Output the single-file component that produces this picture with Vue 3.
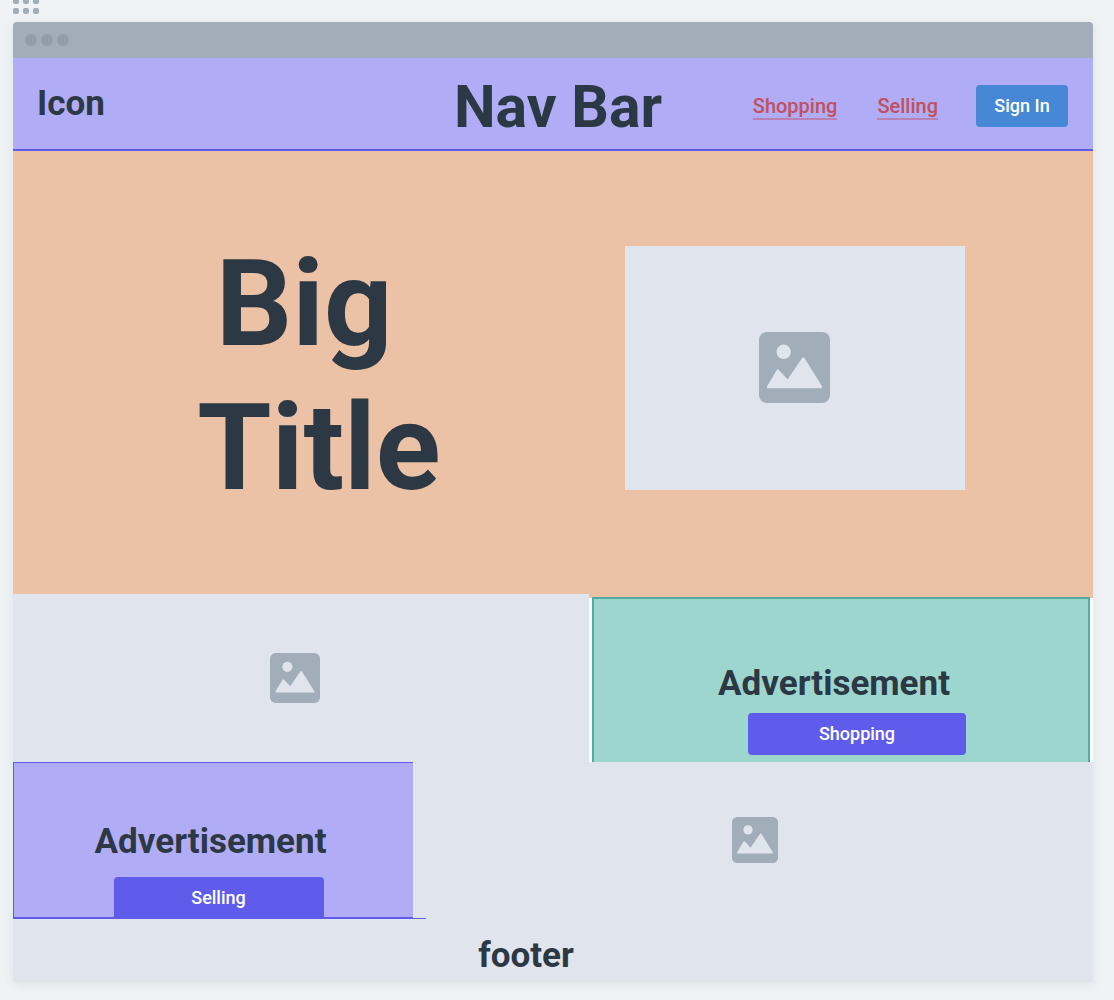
<script setup>
import { h } from 'vue'

const gripDots = 9
const windowDots = 3

const PictureIcon = () =>
  h('svg', { viewBox: '0 0 71 71', 'aria-hidden': 'true', width: '100%', height: '100%' }, [
    h('rect', { width: 71, height: 71, rx: 8, fill: '#a1adb9' }),
    h('circle', { cx: 24.7, cy: 19.8, r: 7.2, fill: '#e0e4ec' }),
    h('path', {
      d: 'M9 55 L18.8 38.5 L28.8 49.2 L44.3 26.5 L62 55 Z',
      fill: '#e0e4ec',
      stroke: '#e0e4ec',
      'stroke-width': 2.4,
      'stroke-linejoin': 'round'
    })
  ])
</script>

<template>
  <div class="page">
    <div class="grip" aria-hidden="true">
      <span v-for="n in gripDots" :key="n"></span>
    </div>

    <div class="window">
      <div class="titlebar" aria-hidden="true">
        <span v-for="n in windowDots" :key="n"></span>
      </div>

      <header class="nav">
        <h2 class="brand">Icon</h2>
        <h1 class="nav-title">Nav Bar</h1>
        <nav class="links">
          <a href="#shopping">Shopping</a>
          <a href="#selling">Selling</a>
          <button type="button" class="btn sign-in">Sign In</button>
        </nav>
      </header>

      <main>
        <section class="hero">
          <p class="big-title">Big&nbsp;<br />Title</p>
          <div class="hero-picture">
            <div class="icon icon-lg"><PictureIcon /></div>
          </div>
        </section>

        <section class="row shopping-row">
          <div class="picture shopping-picture">
            <div class="icon icon-md"><PictureIcon /></div>
          </div>
          <div class="shopping-frame">
            <div class="shopping-ad">
              <h2>Advertisement</h2>
              <button type="button" class="btn">Shopping</button>
            </div>
          </div>
        </section>

        <section class="row selling-row">
          <div class="selling-frame">
            <div class="selling-ad">
              <h2>Advertisement</h2>
              <button type="button" class="btn">Selling</button>
            </div>
          </div>
          <div class="picture selling-picture">
            <div class="icon icon-sm"><PictureIcon /></div>
          </div>
        </section>
      </main>

      <footer class="footer">
        <h2>footer</h2>
      </footer>
    </div>
  </div>
</template>

<style>
body {
  margin: 0;
  background: #eff3f6;
}
</style>

<style scoped>
.page {
  padding: 0 21px 18px 13px;
  color: #2c3844;
  font-family: Roboto, "Liberation Sans", sans-serif;
}

h1,
h2,
p {
  margin: 0;
  font-weight: 700;
}

h2 {
  font-size: 35px;
  line-height: 44px;
}

.grip {
  display: grid;
  grid-template-columns: repeat(3, 6px);
  grid-auto-rows: 6px;
  align-content: end;
  gap: 4px;
  height: 14px;
  overflow: hidden;
  margin-bottom: 8px;
}

.grip span {
  border-radius: 2px;
  background: #a1adb9;
}

.window {
  overflow: hidden;
  border-radius: 4px 4px 2px 2px;
  background: #e0e4ec;
  box-shadow: 0 2px 12px rgba(44, 56, 68, 0.09);
}

.titlebar {
  display: flex;
  align-items: center;
  gap: 4px;
  height: 36px;
  padding: 0 12px;
  background: #a1adb9;
}

.titlebar span {
  width: 12px;
  height: 12px;
  border-radius: 50%;
  background: #909dab;
}

.nav {
  display: grid;
  grid-template-columns: 1fr auto 1fr;
  align-items: center;
  min-height: 91px;
  padding: 0 25px 0 24px;
  border-bottom: 2px solid #5f5ceb;
  background: #b0acf5;
}

.nav-title {
  padding: 7px 0 0 11px;
  font-size: 59px;
  line-height: 72px;
}

.links {
  display: flex;
  justify-content: flex-end;
  align-items: center;
  gap: 40px;
  padding-top: 5px;
}

.links a {
  padding-top: 2px;
  border-bottom: 2px solid #b981b2;
  color: #c2505f;
  font-size: 20px;
  font-weight: 500;
  line-height: 24px;
  text-decoration: none;
}

.links .btn {
  margin-left: -2px;
}

.btn {
  height: 42px;
  padding: 0 0 2px;
  border: 0;
  border-radius: 4px;
  background: #5f5ceb;
  color: #fff;
  font-family: inherit;
  font-size: 18px;
  font-weight: 500;
}

.sign-in {
  width: 92px;
  background: #4688d5;
}

.hero {
  display: grid;
  grid-template-columns: 612fr 468fr;
  align-items: center;
  min-height: 443px;
  background: #ebc2a5;
}

.big-title {
  padding-top: 6px;
  font-size: 120px;
  line-height: 144px;
  text-align: center;
}

.hero-picture {
  display: grid;
  place-items: center;
  width: 340px;
  height: 244px;
  margin-bottom: 10px;
  background: #e0e4ec;
}

.icon {
  display: flex;
}

.icon-lg {
  width: 71px;
  height: 71px;
  margin-right: 2px;
}

.icon-md {
  width: 50px;
  height: 50px;
}

.icon-sm {
  width: 46px;
  height: 46px;
}

.row {
  display: grid;
}

.shopping-row {
  grid-template-columns: 8fr 7fr;
  min-height: 168px;
}

.selling-row {
  grid-template-columns: 413fr 667fr;
  min-height: 157px;
}

.picture {
  display: grid;
  place-items: center;
  background: #e0e4ec;
}

.shopping-picture {
  padding-right: 12px;
}

.shopping-frame {
  display: grid;
  padding: 0 3px;
  border-top: 4px solid #ebc2a5;
  background: #fff;
}

.shopping-ad {
  display: flex;
  flex-direction: column;
  align-items: center;
  gap: 7px;
  margin-top: -1px;
  padding: 63px 14px 7px 0;
  border: 2px solid #52ab9c;
  border-bottom: 0;
  background: #9dd6cf;
}

.shopping-ad .btn {
  width: 218px;
  margin-left: 46px;
}

.selling-frame {
  display: grid;
  border-bottom: 1px solid #5f5ceb;
}

.selling-ad {
  display: flex;
  flex-direction: column;
  align-items: center;
  gap: 13px;
  margin-right: 13px;
  padding: 57px 6px 0 0;
  border: solid #5f5ceb;
  border-width: 1px 0 1px 1px;
  background: #b0acf5;
}

.selling-ad .btn {
  width: 210px;
  height: 40px;
  margin-left: 16px;
  padding: 0;
  border-radius: 4px 4px 0 0;
}

.selling-picture {
  padding: 0 9px 2px 0;
}

.footer {
  padding: 15px 54px 4px 0;
  text-align: center;
}
</style>
